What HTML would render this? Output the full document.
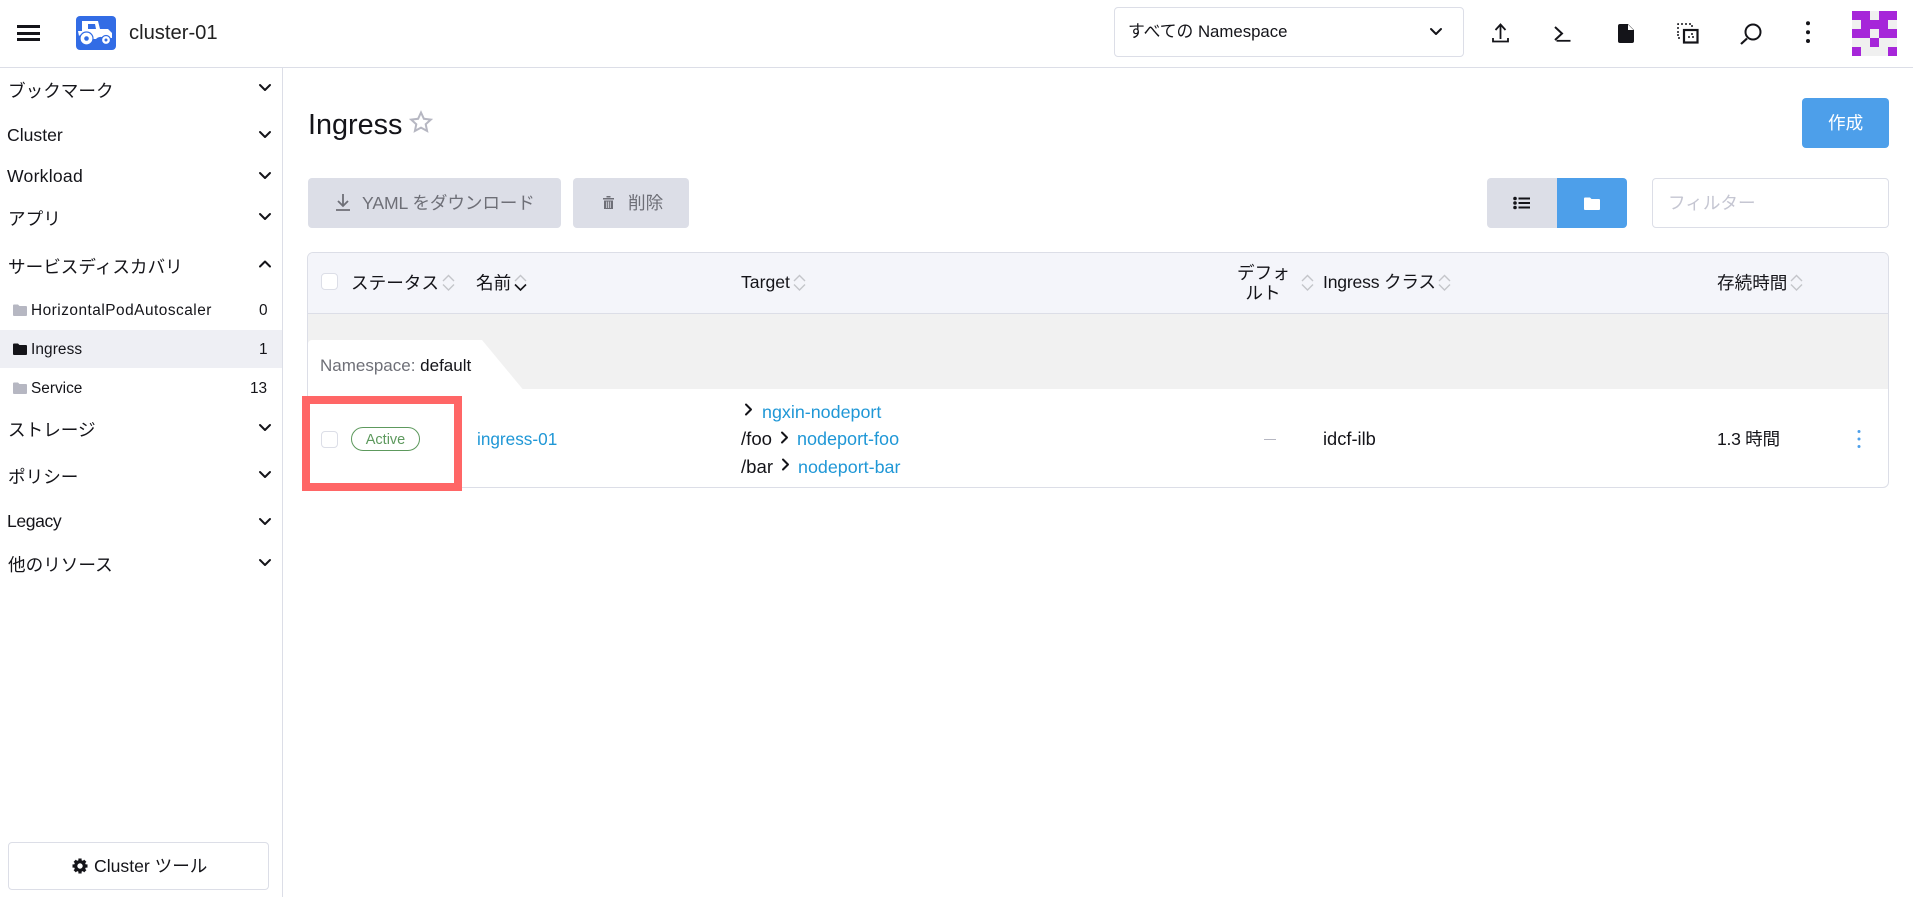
<!DOCTYPE html>
<html lang="ja">
<head>
<meta charset="utf-8">
<title>Ingress</title>
<style>
html,body{margin:0;padding:0;width:1913px;height:897px;overflow:hidden;background:#fff}
body{position:relative;font-family:"Liberation Sans","Noto Sans CJK JP",sans-serif;color:#141419;font-size:17.6px}
.t{position:absolute;white-space:nowrap;line-height:24px;height:24px}
.b{position:absolute;box-sizing:border-box}
.s{font-size:15.4px}
.l{color:#1f97d6;font-size:17.6px}
svg{position:absolute;overflow:visible}
.chev{fill:none;stroke:#141419;stroke-width:2;stroke-linecap:round;stroke-linejoin:round}
.sort{fill:none;stroke:#c4c5ca;stroke-width:1.4}
.sort2{fill:none;stroke:#141419;stroke-width:1.6}
.av{position:absolute;width:9px;height:9px;background:#a626d9}
</style>
</head>
<body>
<!-- header -->
<div class="b" style="left:0;top:67px;width:1913px;height:1px;background:#dcdee7"></div>
<div class="b" style="left:17px;top:25px;width:23px;height:3px;background:#141419"></div>
<div class="b" style="left:17px;top:32px;width:23px;height:3px;background:#141419"></div>
<div class="b" style="left:17px;top:38px;width:23px;height:3px;background:#141419"></div>
<div class="b" style="left:76px;top:16px;width:40px;height:34px;background:#326ce5;border-radius:4px"></div>
<svg style="left:76px;top:16px" width="40" height="34" viewBox="0 0 40 34">
<path d="M6 5h16l2 8h8l4 4v5h-8a6 6 0 0 0-8 1h-5a7 7 0 0 0-12-3l-1-5h4V8H6z" fill="#fff"/>
<path d="M12 8h7l1 5h-8z" fill="#326ce5"/>
<circle cx="10.500" cy="22.500" r="6.500" fill="#fff" stroke="#326ce5" stroke-width="1.200"/>
<circle cx="10.500" cy="22.500" r="2.300" fill="#326ce5"/>
<circle cx="30" cy="24" r="4.500" fill="#fff" stroke="#326ce5" stroke-width="1.200"/>
<circle cx="30" cy="24" r="1.500" fill="#326ce5"/>
</svg>
<div class="t" style="left:129px;top:21px;font-size:20.2px;color:#222">cluster-01</div>

<div class="b" style="left:1114px;top:7px;width:350px;height:50px;border:1px solid #dcdee7;border-radius:4px"></div>
<div class="t" style="left:1128px;top:20px;font-size:16.8px">すべての Namespace</div>
<svg style="left:1430px;top:28px" width="12" height="8"><path class="chev" d="M1 1l5 5 5-5"/></svg>

<svg style="left:1490px;top:22px" width="20" height="24" fill="none" stroke="#141419" stroke-width="1.800">
<path d="M10.500 17V3M5.500 8l5-5.500 5 5.500M3 16v3.500h15V16"/>
</svg>
<svg style="left:1552px;top:22px" width="20" height="24" fill="none" stroke="#141419">
<path d="M3 5l7 6.500-7 6.500" stroke-width="2"/><path d="M4.500 18.800h14" stroke-width="1.800"/>
</svg>
<svg style="left:1618px;top:24px" width="16" height="20"><path d="M2 0h8l6 6v11a2 2 0 0 1-2 2H2a2 2 0 0 1-2-2V2a2 2 0 0 1 2-2z" fill="#141419"/><path d="M10 0.500v5.500h5.500z" fill="#fff"/></svg>
<svg style="left:1678px;top:22px" width="24" height="24" fill="none" stroke="#141419">
<path d="M0 11V2h14v3" stroke-width="1.500" stroke-dasharray="2 2"/>
<rect x="6" y="8" width="13.500" height="12.500" stroke-width="2.200"/>
<path d="M0 12v4h3M10 15h2M14 15h2M14 11v3" stroke-width="1.500" stroke-dasharray="2 2"/>
</svg>
<svg style="left:1740px;top:22px" width="24" height="24" fill="none" stroke="#141419" stroke-width="2"><circle cx="13" cy="10" r="7.500"/><path d="M7 16.500l-6 5.500" stroke-width="2.200"/></svg>
<svg style="left:1804px;top:20px" width="8" height="24" fill="#141419"><circle cx="4" cy="3.300" r="2"/><circle cx="4" cy="12.300" r="2"/><circle cx="4" cy="21" r="2"/></svg>

<div class="b" style="left:1852px;top:11px;width:45px;height:45px;background:#f0f0f0"></div>
<div class="av" style="left:1852px;top:11px;width:18px"></div>
<div class="av" style="left:1879px;top:11px;width:18px"></div>
<div class="av" style="left:1861px;top:20px;width:27px"></div>
<div class="av" style="left:1852px;top:29px;width:18px"></div>
<div class="av" style="left:1879px;top:29px;width:18px"></div>
<div class="av" style="left:1870px;top:38px"></div>
<div class="av" style="left:1852px;top:47px"></div>
<div class="av" style="left:1888px;top:47px"></div>

<!-- sidebar -->
<div class="b" style="left:282px;top:68px;width:1px;height:829px;background:#dcdee7"></div>
<div class="t" style="left:8px;top:79px">ブックマーク</div>
<div class="t" style="left:7px;top:123px">Cluster</div>
<div class="t" style="left:7px;top:164px;letter-spacing:.25px">Workload</div>
<div class="t" style="left:8px;top:207px">アプリ</div>
<div class="t" style="left:8px;top:255px">サービスディスカバリ</div>
<div class="b" style="left:0;top:330px;width:282px;height:38px;background:#eeeff4"></div>
<svg style="left:13px;top:304px" width="14" height="12"><path d="M0 1.500a1 1 0 0 1 1-1h4l1.500 1.500H13a1 1 0 0 1 1 1V11a1 1 0 0 1-1 1H1a1 1 0 0 1-1-1z" fill="#b6b7c2"/></svg>
<svg style="left:13px;top:343px" width="14" height="12"><path d="M0 1.500a1 1 0 0 1 1-1h4l1.500 1.500H13a1 1 0 0 1 1 1V11a1 1 0 0 1-1 1H1a1 1 0 0 1-1-1z" fill="#141419"/></svg>
<svg style="left:13px;top:382px" width="14" height="12"><path d="M0 1.500a1 1 0 0 1 1-1h4l1.500 1.500H13a1 1 0 0 1 1 1V11a1 1 0 0 1-1 1H1a1 1 0 0 1-1-1z" fill="#b6b7c2"/></svg>
<div class="t s" style="left:31px;top:299px;letter-spacing:.5px">HorizontalPodAutoscaler</div>
<div class="t s" style="left:259px;top:299px">0</div>
<div class="t s" style="left:31px;top:338px;letter-spacing:.1px">Ingress</div>
<div class="t s" style="left:259px;top:338px">1</div>
<div class="t s" style="left:31px;top:377px">Service</div>
<div class="t s" style="left:250px;top:377px">13</div>
<div class="t" style="left:8px;top:418px">ストレージ</div>
<div class="t" style="left:8px;top:465px">ポリシー</div>
<div class="t" style="left:7px;top:509px;letter-spacing:-.4px">Legacy</div>
<div class="t" style="left:8px;top:553px">他のリソース</div>
<svg style="left:259px;top:84px" width="12" height="8"><path class="chev" d="M1 1l5 5 5-5"/></svg>
<svg style="left:259px;top:131px" width="12" height="8"><path class="chev" d="M1 1l5 5 5-5"/></svg>
<svg style="left:259px;top:172px" width="12" height="8"><path class="chev" d="M1 1l5 5 5-5"/></svg>
<svg style="left:259px;top:213px" width="12" height="8"><path class="chev" d="M1 1l5 5 5-5"/></svg>
<svg style="left:259px;top:260px" width="12" height="8"><path class="chev" d="M1 6.500l5-5 5 5"/></svg>
<svg style="left:259px;top:424px" width="12" height="8"><path class="chev" d="M1 1l5 5 5-5"/></svg>
<svg style="left:259px;top:471px" width="12" height="8"><path class="chev" d="M1 1l5 5 5-5"/></svg>
<svg style="left:259px;top:518px" width="12" height="8"><path class="chev" d="M1 1l5 5 5-5"/></svg>
<svg style="left:259px;top:559px" width="12" height="8"><path class="chev" d="M1 1l5 5 5-5"/></svg>

<div class="b" style="left:8px;top:842px;width:261px;height:48px;border:1px solid #dcdee7;border-radius:4px"></div>
<svg style="left:71px;top:857px" width="18" height="18"><path d="M9 1.500v3M9 13.500v3M1.500 9h3M13.500 9h3M3.700 3.700l2.100 2.100M12.200 12.200l2.100 2.100M3.700 14.300l2.100-2.100M12.200 5.800l2.100-2.100" stroke="#141419" stroke-width="3.200"/><circle cx="9" cy="9" r="4.300" fill="none" stroke="#141419" stroke-width="3.200"/></svg>
<div class="t" style="left:94px;top:854px">Cluster ツール</div>

<!-- page heading -->
<div class="t" style="left:308px;top:105px;height:40px;line-height:40px;font-size:28.8px">Ingress</div>
<svg style="left:409px;top:110px" width="24" height="24"><path d="M12 2.500l2.900 6.300 6.900.8-5.100 4.600 1.400 6.800-6.100-3.400-6.100 3.400 1.400-6.800-5.100-4.600 6.900-.8z" fill="none" stroke="#b6b7c2" stroke-width="2"/></svg>
<div class="b" style="left:1802px;top:98px;width:87px;height:50px;background:#4d9fea;border-radius:4px"></div>
<div class="t" style="left:1828px;top:111px;color:#fff">作成</div>

<div class="b" style="left:308px;top:178px;width:253px;height:50px;background:#dcdee7;border-radius:4px"></div>
<svg style="left:335px;top:193px" width="16" height="18" fill="none" stroke="#6e6f77" stroke-width="1.800"><path d="M8 1v11M3 8l5 5 5-5M1 17h14"/></svg>
<div class="t" style="left:362px;top:191px;font-size:17.6px;color:#6e6f77;letter-spacing:-.1px">YAML をダウンロード</div>
<div class="b" style="left:573px;top:178px;width:116px;height:50px;background:#dcdee7;border-radius:4px"></div>
<svg style="left:603px;top:196px" width="11" height="13" fill="#6e6f77"><path d="M0 2h11v1.500H0zM3.500 0h4v1.500h-4zM1 4.500h9V13H1z"/><path d="M3.700 5.500v6.500M5.500 5.500v6.500M7.300 5.500v6.500" stroke="#dcdee7" stroke-width=".8"/></svg>
<div class="t" style="left:628px;top:191px;font-size:17.6px;color:#6e6f77">削除</div>

<div class="b" style="left:1487px;top:178px;width:70px;height:50px;background:#dcdee7;border-radius:4px 0 0 4px"></div>
<div class="b" style="left:1557px;top:178px;width:70px;height:50px;background:#4d9fea;border-radius:0 4px 4px 0"></div>
<svg style="left:1513px;top:196px" width="18" height="14" fill="#141419"><circle cx="2" cy="2.500" r="1.800"/><circle cx="2" cy="7" r="1.800"/><circle cx="2" cy="11.500" r="1.800"/><path d="M5.500 1.500H17v2H5.500zM5.500 6H17v2H5.500zM5.500 10.500H17v2H5.500z"/></svg>
<svg style="left:1584px;top:197px" width="16" height="13"><path d="M0 1.500a1 1 0 0 1 1-1h5l1.500 1.500H15a1 1 0 0 1 1 1V12a1 1 0 0 1-1 1H1a1 1 0 0 1-1-1z" fill="#fff"/></svg>
<div class="b" style="left:1652px;top:178px;width:237px;height:50px;border:1px solid #dcdee7;border-radius:4px"></div>
<div class="t" style="left:1668px;top:191px;color:#c5c6d2">フィルター</div>

<!-- table -->
<div class="b" style="left:307px;top:252px;width:1582px;height:236px;border:1px solid #dcdee7;border-radius:6px;overflow:hidden;background:#fff">
  <div class="b" style="left:0;top:0;width:1580px;height:61px;background:#f4f5fa;border-bottom:1px solid #dcdee7"></div>
  <div class="b" style="left:0;top:61px;width:1580px;height:75px;background:#f1f1f1"></div>
  <svg style="left:0;top:87px" width="225" height="50"><path d="M0 50V4a4 4 0 0 1 4-4H174L215 49.500V50z" fill="#fff"/></svg>
</div>

<div class="b" style="left:321px;top:273px;width:17px;height:17px;background:#fff;border:1px solid #dcdee7;border-radius:4px"></div>
<div class="t" style="left:351px;top:271px">ステータス</div>
<svg style="left:442px;top:274px" width="13" height="17"><path class="sort" d="M1 7l5.500-5.500L12 7M1 10.500L6.500 16l5.500-5.500"/></svg>
<div class="t" style="left:476px;top:271px">名前</div>
<svg style="left:514px;top:274px" width="13" height="17"><path class="sort" d="M1 7l5.500-5.500L12 7"/><path class="sort2" d="M1 10.500L6.500 16l5.500-5.500"/></svg>
<div class="t" style="left:741px;top:270px">Target</div>
<svg style="left:793px;top:274px" width="13" height="17"><path class="sort" d="M1 7l5.500-5.500L12 7M1 10.500L6.500 16l5.500-5.500"/></svg>
<div class="t" style="left:1237px;top:261px;width:52px;text-align:center;font-size:17.600px">デフォ</div>
<div class="t" style="left:1237px;top:281px;width:52px;text-align:center;font-size:17.600px">ルト</div>
<svg style="left:1301px;top:274px" width="13" height="17"><path class="sort" d="M1 7l5.500-5.500L12 7M1 10.500L6.500 16l5.500-5.500"/></svg>
<div class="t" style="left:1323px;top:270px;letter-spacing:-.2px">Ingress クラス</div>
<svg style="left:1438px;top:274px" width="13" height="17"><path class="sort" d="M1 7l5.500-5.500L12 7M1 10.500L6.500 16l5.500-5.500"/></svg>
<div class="t" style="left:1717px;top:271px">存続時間</div>
<svg style="left:1790px;top:274px" width="13" height="17"><path class="sort" d="M1 7l5.500-5.500L12 7M1 10.500L6.500 16l5.500-5.500"/></svg>

<div class="t" style="left:320px;top:354px;font-size:17px;color:#141419"><span style="color:#6e6f77">Namespace:</span> default</div>

<div class="b" style="left:321px;top:431px;width:17px;height:17px;background:#fff;border:1px solid #dcdee7;border-radius:4px"></div>
<div class="b" style="left:351px;top:427px;width:69px;height:24px;border:1px solid #5d995d;border-radius:12px"></div>
<div class="t" style="left:351px;top:428px;width:69px;text-align:center;font-size:14.5px;color:#5d995d">Active</div>
<div class="t l" style="left:477px;top:427px;font-size:17.2px">ingress-01</div>

<svg style="left:744px;top:403px" width="9" height="13"><path class="chev" d="M2 1.500L7 6.500 2 11.500" style="stroke-width:2"/></svg>
<div class="t l" style="left:762px;top:400px;font-size:17.9px">ngxin-nodeport</div>
<div class="t" style="left:741px;top:427px;font-size:18.6px">/foo</div>
<svg style="left:780px;top:431px" width="9" height="13"><path class="chev" d="M2 1.500L7 6.500 2 11.500" style="stroke-width:2"/></svg>
<div class="t l" style="left:797px;top:427px;font-size:18px">nodeport-foo</div>
<div class="t" style="left:741px;top:455px;font-size:18.6px">/bar</div>
<svg style="left:781px;top:458px" width="9" height="13"><path class="chev" d="M2 1.500L7 6.500 2 11.500" style="stroke-width:2"/></svg>
<div class="t l" style="left:798px;top:455px;font-size:17.9px">nodeport-bar</div>

<div class="b" style="left:1264px;top:439px;width:12px;height:1px;background:#b6b7c2"></div>
<div class="t" style="left:1323px;top:427px;font-size:18.3px">idcf-ilb</div>
<div class="t" style="left:1717px;top:427px;letter-spacing:-.3px">1.3 時間</div>
<svg style="left:1855px;top:428px" width="8" height="22" fill="#4d9fea"><circle cx="4" cy="3.500" r="1.500"/><circle cx="4" cy="11" r="1.500"/><circle cx="4" cy="18.500" r="1.500"/></svg>

<!-- highlight -->
<div class="b" style="left:302px;top:396px;width:160px;height:95px;border:8px solid #ff6666"></div>
</body>
</html>
